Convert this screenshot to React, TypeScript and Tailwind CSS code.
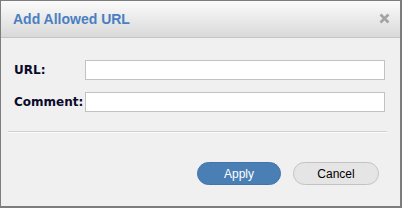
export default function App() {
  return (
    <div className="w-[402px] h-[208px] bg-[#f0f0f0] border-l border-t border-r-2 border-b-2 border-[#7d7d7d] flex flex-col font-['Liberation_Sans',Arial,sans-serif]">
      <div className="h-[37px] shrink-0 flex items-center justify-between pl-[12px] pr-[10px] bg-gradient-to-b from-[#fbfbfb] to-[#d9d9d9] border-b border-[#c4c4c4]">
        <span className="text-[14px] font-bold text-[#4a7fc1]">Add Allowed URL</span>
        <svg width="11" height="11" viewBox="0 0 11 11" className="mt-[-2px]">
          <path d="M1.5 1.5 L9.5 9.5 M9.5 1.5 L1.5 9.5" stroke="#a3a3a3" strokeWidth="2.6" strokeLinecap="butt" />
        </svg>
      </div>

      <div className="flex flex-col pt-[22px] pl-[13px] pr-[14px] font-['DejaVu_Sans',Verdana,sans-serif]">
        <div className="grid grid-cols-[71px_300px] gap-y-[12px] items-center">
          <label className="text-[12px] font-bold text-[#0a0a2a]">URL:</label>
          <input className="h-[20px] bg-white border border-[#c2c2c2] outline-none" />
          <label className="text-[12px] font-bold text-[#0a0a2a]">Comment:</label>
          <input className="h-[20px] bg-white border border-[#c2c2c2] outline-none" />
        </div>
      </div>

      <div className="mt-[19px] ml-[7px] mr-[13px] h-[2px] border-t border-[#d2d2d2] bg-[#fafafa]"></div>

      <div className="flex justify-end gap-[12px] mt-[29px] pr-[21px]">
        <button className="w-[84px] h-[23px] rounded-full bg-[#4a7fb6] border border-[#4174aa] text-white text-[12px]">Apply</button>
        <button className="w-[86px] h-[23px] rounded-full bg-[#e5e5e5] border border-[#c3c3c3] text-black text-[12px]">Cancel</button>
      </div>
    </div>
  );
}
